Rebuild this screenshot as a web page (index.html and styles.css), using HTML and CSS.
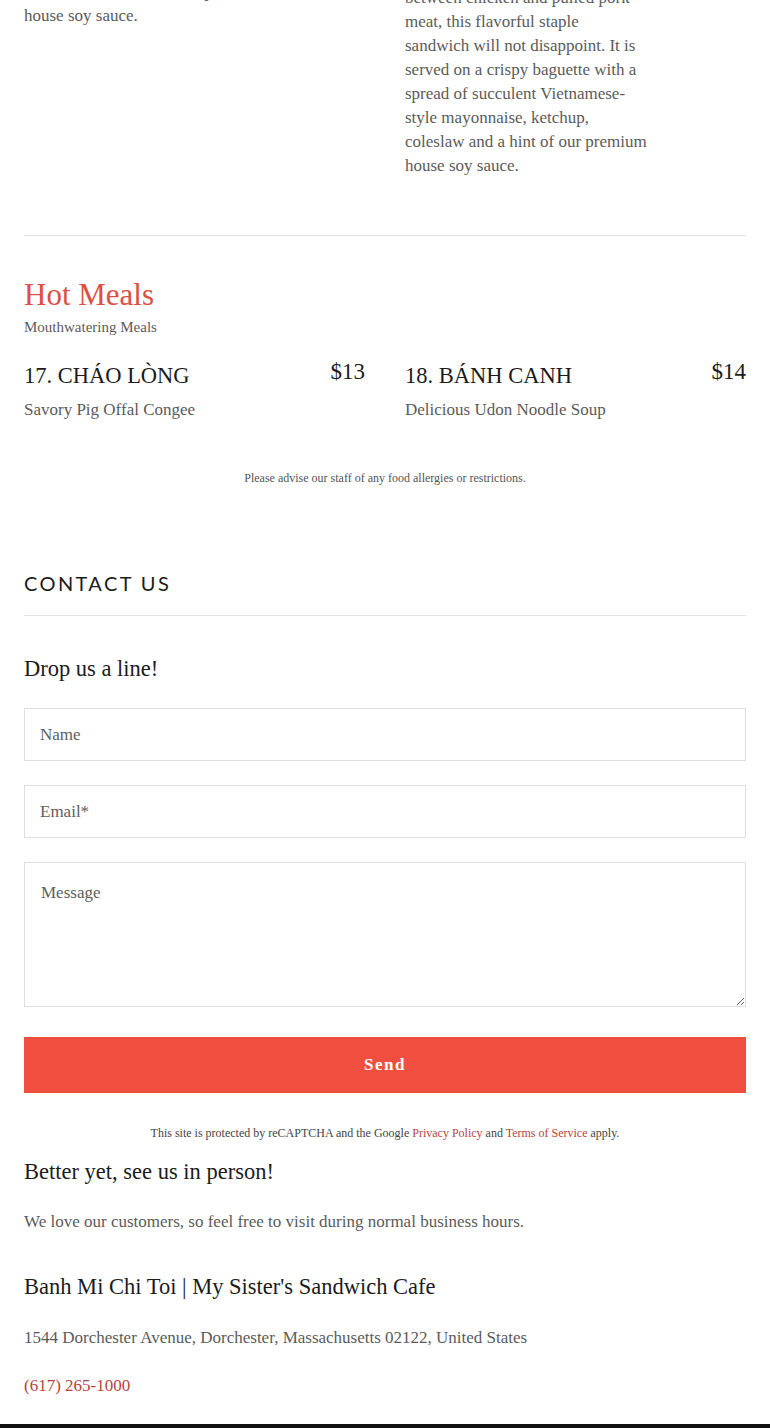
FILE: index.html
```html
<!DOCTYPE html>
<html lang="en">
<head>
<meta charset="utf-8">
<title>Banh Mi Chi Toi</title>
<link rel="stylesheet" href="styles.css">
</head>
<body>
<main class="page">
  <section class="menu-cont">
    <div class="menu-grid">
      <div class="item item-tail">
        <p class="desc">coleslaw and a hint of our premium<br>house soy sauce.</p>
      </div>
      <div class="item">
        <p class="desc">between chicken and pulled pork<br>meat, this flavorful staple<br>sandwich will not disappoint. It is<br>served on a crispy baguette with a<br>spread of succulent Vietnamese-<br>style mayonnaise, ketchup,<br>coleslaw and a hint of our premium<br>house soy sauce.</p>
      </div>
    </div>
  </section>

  <hr class="rule">

  <section class="menu-section">
    <h2 class="section-title">Hot Meals</h2>
    <p class="section-sub">Mouthwatering Meals</p>
    <div class="menu-grid items">
      <div class="item">
        <div class="item-head">
          <h3 class="item-title">17. CHÁO LÒNG</h3>
          <span class="price">$13</span>
        </div>
        <p class="desc">Savory Pig Offal Congee</p>
      </div>
      <div class="item">
        <div class="item-head">
          <h3 class="item-title">18. BÁNH CANH</h3>
          <span class="price">$14</span>
        </div>
        <p class="desc">Delicious Udon Noodle Soup</p>
      </div>
    </div>
    <p class="note">Please advise our staff of any food allergies or restrictions.</p>
  </section>

  <section class="contact">
    <h2 class="contact-title">CONTACT US</h2>
    <hr class="rule rule-contact">
    <h3 class="sub-heading">Drop us a line!</h3>
    <form class="form">
      <input class="field" type="text" placeholder="Name">
      <input class="field" type="email" placeholder="Email*">
      <textarea class="field field-area" placeholder="Message"></textarea>
      <button class="send" type="button">Send</button>
    </form>
    <p class="recaptcha">This site is protected by reCAPTCHA and the Google <a href="#">Privacy Policy</a> and <a href="#">Terms of Service</a> apply.</p>
    <h3 class="sub-heading visit">Better yet, see us in person!</h3>
    <p class="body-text">We love our customers, so feel free to visit during normal business hours.</p>
    <h3 class="sub-heading biz">Banh Mi Chi Toi | My Sister's Sandwich Cafe</h3>
    <p class="body-text address">1544 Dorchester Avenue, Dorchester, Massachusetts 02122, United States</p>
    <p class="body-text phone"><a href="#">(617) 265-1000</a></p>
  </section>
</main>
<footer class="footer-bar"></footer>
</body>
</html>
```

FILE: styles.css
```css
* { box-sizing: border-box; }

html, body {
  margin: 0;
  padding: 0;
  background: #ffffff;
}

body {
  font-family: "Liberation Serif", "Times New Roman", serif;
  color: #5b5b5b;
  overflow: hidden;
}

.page {
  padding: 0 24px;
}

p, h2, h3 { margin: 0; font-weight: normal; }

.menu-cont {
  margin-top: -14px;
  padding-bottom: 57px;
}

.menu-grid {
  display: grid;
  grid-template-columns: 1fr 1fr;
  column-gap: 40px;
}

.desc {
  font-size: 17px;
  line-height: 24px;
  color: #5b5b5b;
}

.item-tail {
  margin-top: -6px;
}

.rule {
  border: 0;
  border-top: 1px solid #e3e3e3;
  margin: 0;
}

.section-title {
  margin-top: 39px;
  font-size: 31px;
  line-height: 40px;
  color: #dc4f43;
}

.section-sub {
  margin-top: 2px;
  font-size: 15px;
  line-height: 20px;
  color: #5b5b5b;
}

.items {
  margin-top: 20px;
}

.item-head {
  display: flex;
  justify-content: space-between;
  align-items: flex-start;
}

.item-title {
  font-size: 22.5px;
  line-height: 30px;
  padding-top: 4px;
  color: #1b1b1b;
}

.price {
  font-size: 23px;
  line-height: 30px;
  color: #1b1b1b;
}

.items .desc {
  margin-top: 7px;
}

.note {
  margin-top: 47px;
  text-align: center;
  font-size: 12px;
  line-height: 18px;
  color: #555;
}

.contact {
  padding-top: 82px;
}

.contact-title {
  font-family: Lato, "Liberation Sans", sans-serif;
  font-size: 20px;
  line-height: 28px;
  letter-spacing: 2.4px;
  color: #1b1b1b;
}

.rule-contact {
  margin-top: 18px;
}

.sub-heading {
  font-size: 22.5px;
  line-height: 30px;
  color: #1b1b1b;
  margin-top: 38px;
}

.form {
  display: flex;
  flex-direction: column;
  gap: 24px;
  margin-top: 24px;
}

.field {
  display: block;
  width: 100%;
  height: 53px;
  border: 1px solid #dedede;
  border-radius: 0;
  background: #fff;
  padding: 0 15px;
  font-family: "Liberation Serif", "Times New Roman", serif;
  font-size: 17px;
  color: #555;
  outline: none;
}

.field::placeholder {
  color: #5e5e5e;
  opacity: 1;
}

.field-area {
  height: 145px;
  padding: 18px 16px;
  line-height: 24px;
  resize: vertical;
}

.send {
  margin-top: 6px;
  height: 56px;
  width: 100%;
  border: 0;
  border-radius: 0;
  background: #f04f3f;
  color: #fff;
  font-family: "Liberation Serif", "Times New Roman", serif;
  font-weight: bold;
  font-size: 17px;
  letter-spacing: 1.5px;
}

.recaptcha {
  margin-top: 31px;
  text-align: center;
  font-size: 12px;
  line-height: 18px;
  color: #444;
}

.recaptcha a, .phone a {
  color: #b8433a;
  text-decoration: none;
}

.sub-heading.visit {
  margin-top: 15px;
}

.body-text {
  font-size: 17px;
  line-height: 24px;
  color: #5b5b5b;
  margin-top: 23px;
}

.sub-heading.biz {
  margin-top: 38px;
}

.address {
  margin-top: 24px;
}

.phone {
  margin-top: 24px;
}

.footer-bar {
  margin-top: 26px;
  height: 40px;
  background: #111;
}
```
